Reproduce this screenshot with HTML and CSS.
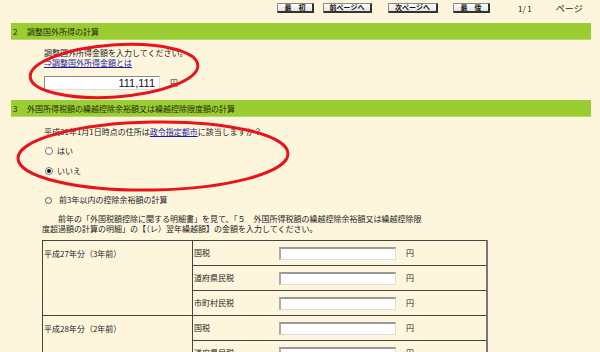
FILE: index.html
```html
<!DOCTYPE html>
<html lang="ja">
<head>
    <meta charset="UTF-8">
    <title>外国税額控除の計算</title>
    <link rel="stylesheet" href="styles.css">
</head>
<body>
    <div class="pager">
        <button class="pbtn b-first">最　初</button>
        <button class="pbtn b-prev">前ページへ</button>
        <button class="pbtn b-next">次ページへ</button>
        <button class="pbtn b-last">最　後</button>
        <span class="pnum">1/ 1</span>
        <span class="plabel">ページ</span>
    </div>

    <div class="section-head"><span class="no">2</span>調整国外所得の計算</div>
    <div class="section-body s1">
        <div class="line">調整国外所得金額を入力してください。</div>
        <div class="line"><a href="#">⇒調整国外所得金額とは</a></div>
        <div class="amount-row">
            <input class="amount big" type="text" value="111,111">
            <span class="yen">円</span>
        </div>
    </div>

    <div class="section-head"><span class="no">3</span>外国所得税額の繰越控除余裕額又は繰越控除限度額の計算</div>
    <div class="section-body s2">
        <div class="line">平成31年1月1日時点の住所は<a href="#">政令指定都市</a>に該当しますか？</div>
        <label class="radio-row r1"><input type="radio" name="city"><span>はい</span></label>
        <label class="radio-row r2"><input type="radio" name="city" checked><span>いいえ</span></label>

        <div class="line sub"><span class="mark"></span>前3年以内の控除余裕額の計算</div>
        <p class="note">前年の「外国税額控除に関する明細書」を見て、「５　外国所得税額の繰越控除余裕額又は繰越控除限<br>度超過額の計算の明細」の【（レ）翌年繰越額】の金額を入力してください。</p>

        <table class="prev">
            <tr>
                <td class="year" rowspan="3">平成27年分（3年前）</td>
                <td class="kind"><div class="cell"><span class="klabel">国税</span><input class="amount" type="text"><span class="yen">円</span></div></td>
            </tr>
            <tr>
                <td class="kind"><div class="cell"><span class="klabel">道府県民税</span><input class="amount" type="text"><span class="yen">円</span></div></td>
            </tr>
            <tr>
                <td class="kind"><div class="cell"><span class="klabel">市町村民税</span><input class="amount" type="text"><span class="yen">円</span></div></td>
            </tr>
            <tr>
                <td class="year" rowspan="3">平成28年分（2年前）</td>
                <td class="kind"><div class="cell"><span class="klabel">国税</span><input class="amount" type="text"><span class="yen">円</span></div></td>
            </tr>
            <tr>
                <td class="kind"><div class="cell"><span class="klabel">道府県民税</span><input class="amount" type="text"><span class="yen">円</span></div></td>
            </tr>
            <tr>
                <td class="kind"><div class="cell"><span class="klabel">市町村民税</span><input class="amount" type="text"><span class="yen">円</span></div></td>
            </tr>
        </table>
    </div>

    <!-- red marker circles drawn over the form -->
    <svg class="marks" width="600" height="352" viewBox="0 0 600 352">
        <ellipse cx="114" cy="71" rx="84" ry="26" transform="rotate(-4 114 71)"></ellipse>
        <ellipse cx="153" cy="156" rx="135" ry="34" transform="rotate(-1 153 156)"></ellipse>
    </svg>
</body>
</html>
```

FILE: styles.css
```css
* {
    margin: 0;
    padding: 0;
    box-sizing: border-box;
}

body {
    position: relative;
    width: 600px;
    height: 352px;
    overflow: hidden;
    background: #fef6dc;
    color: #222;
    font-family: "Noto Sans CJK JP", "Noto Sans", sans-serif;
    font-size: 8px;
    line-height: 10px;
}

a {
    color: #1a1aa6;
    text-decoration: underline;
}

/* page navigation */
.pager {
    height: 23px;
    display: flex;
    align-items: flex-start;
    padding-top: 3px;
    padding-left: 277px;
}

.pbtn {
    height: 10px;
    padding: 0;
    white-space: nowrap;
    overflow: hidden;
    font-family: "Noto Sans CJK JP", sans-serif;
    font-size: 7px;
    font-weight: bold;
    line-height: 7px;
    color: #111;
    background: linear-gradient(#ffffff, #e4e4e4);
    border: 1px solid #888;
    border-right: 2px solid #333;
    border-bottom: 2px solid #333;
    border-radius: 1px;
}

.b-first { width: 37px; }
.b-prev { width: 49px; margin-left: 9px; }
.b-next { width: 50px; margin-left: 16px; }
.b-last { width: 37px; margin-left: 15px; }

.pnum {
    margin-left: 28px;
    white-space: pre;
    font-size: 8px;
    line-height: 12px;
}

.plabel {
    margin-left: 24px;
    font-size: 9px;
    line-height: 12px;
}

/* section headers */
.section-head {
    height: 17px;
    margin: 0 9px 0 11px;
    padding-left: 2px;
    line-height: 17px;
    background: #9acd32;
    border-bottom: 1px solid #b5dc68;
    color: #1e2a0a;
}

.section-head .no {
    display: inline-block;
    width: 14px;
}

.section-body {
    padding-left: 44px;
}

.s1 {
    height: 60px;
    padding-top: 8px;
}

.s2 {
    padding-top: 10px;
}

.line {
    height: 10px;
}

.amount-row {
    display: flex;
    align-items: center;
    margin-top: 8px;
    height: 14px;
}

.amount {
    width: 117px;
    height: 14px;
    background: #fff;
    border: 1px solid #ddd;
    border-top: 2px solid #999;
    border-left: 2px solid #aaa;
    outline: none;
}

.amount.big {
    width: 116px;
    padding-right: 4px;
    text-align: right;
    font-family: "Liberation Sans", Arial, sans-serif;
    font-size: 11px;
    color: #111;
    border-top: 1px solid #888;
    border-left: 1px solid #888;
}

.yen {
    margin-left: 10px;
}

/* radio rows */
.radio-row {
    display: flex;
    align-items: center;
    height: 10px;
}

.r1 { margin-top: 9px; }
.r2 { margin-top: 10px; }

.radio-row input {
    appearance: none;
    width: 8px;
    height: 8px;
    margin: 0 4px 0 1px;
    border: 1px solid #777;
    border-radius: 50%;
    background: #fff;
    display: grid;
    place-content: center;
}

.radio-row input:checked::before {
    content: "";
    width: 4px;
    height: 4px;
    border-radius: 50%;
    background: #111;
}

.sub {
    display: flex;
    align-items: center;
    margin-top: 19px;
}

.sub .mark {
    width: 7px;
    height: 7px;
    margin: 0 7px 0 1px;
    border: 1px solid #555;
    border-radius: 50%;
}

.note {
    margin: 9px 0 0 -2px;
    text-indent: 16px;
    white-space: nowrap;
}

/* previous years table */
.prev {
    margin: 6px 0 0 -2px;
    width: 446px;
    border-collapse: collapse;
    border: 1px solid #666;
    border-right: 2px solid #777;
}

.prev td {
    border: 1px solid #444;
    height: 25px;
    padding: 0;
}

.year {
    width: 150px;
    vertical-align: top;
    padding: 8px 0 0 1px !important;
}

.cell {
    display: flex;
    align-items: center;
    height: 24px;
    padding-left: 1px;
}

.klabel {
    width: 85px;
}

.cell .amount {
    height: 13px;
}

/* red circles */
.marks {
    position: absolute;
    left: 0;
    top: 0;
    pointer-events: none;
}

.marks ellipse {
    fill: none;
    stroke: #e8141c;
    stroke-width: 3;
}
```
